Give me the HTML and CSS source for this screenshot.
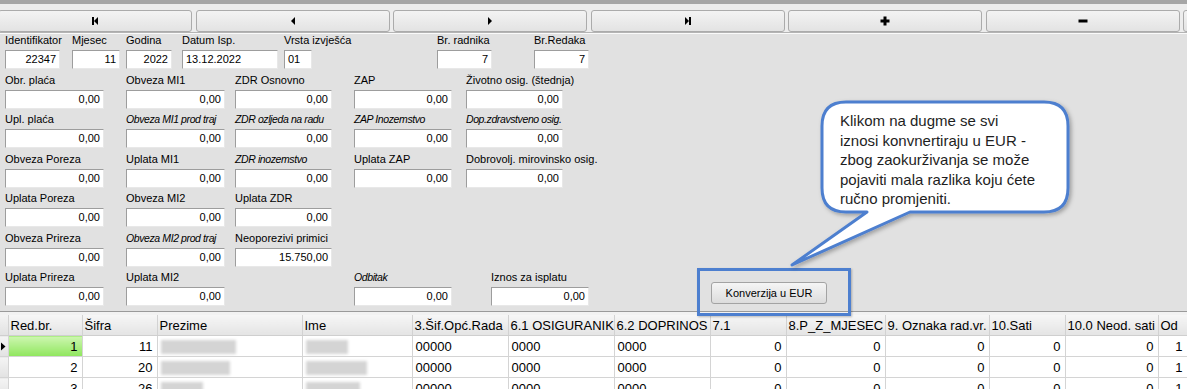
FILE: index.html
```html
<!DOCTYPE html>
<html lang="hr">
<head>
<meta charset="utf-8">
<title>Obračun plaće</title>
<link rel="stylesheet" href="styles.css">
</head>
<body>

<div class="topband"></div>

<div class="toolbar">
  <div class="tbtn"><svg width="10" height="10" viewBox="0 0 10 10"><rect x="2" y="1" width="2" height="8"/><path d="M4 5 L8 1 V9 Z"/></svg></div>
  <div class="tbtn"><svg width="10" height="10" viewBox="0 0 10 10"><path d="M3 5 L7 1 V9 Z"/></svg></div>
  <div class="tbtn"><svg width="10" height="10" viewBox="0 0 10 10"><path d="M7 5 L3 1 V9 Z"/></svg></div>
  <div class="tbtn"><svg width="10" height="10" viewBox="0 0 10 10"><path d="M6 5 L2 1 V9 Z"/><rect x="6" y="1" width="2" height="8"/></svg></div>
  <div class="tbtn"><svg width="10" height="10" viewBox="0 0 10 10"><rect x="0.5" y="3.5" width="9" height="3"/><rect x="3.5" y="0.5" width="3" height="9"/></svg></div>
  <div class="tbtn"><svg width="10" height="10" viewBox="0 0 10 10"><rect x="0.5" y="3.5" width="9" height="3"/></svg></div>
  <div class="tbtn"></div>
</div>

<div class="form">
  <div class="row">
    <div class="field w55"><label>Identifikator</label><div class="inp">22347</div></div>
    <div class="field w48 g12"><label>Mjesec</label><div class="inp">11</div></div>
    <div class="field w46 g6"><label>Godina</label><div class="inp">2022</div></div>
    <div class="field w96 g10"><label>Datum Isp.</label><div class="inp left">13.12.2022</div></div>
    <div class="field w28 g6"><label>Vrsta izvješća</label><div class="inp left">01</div></div>
    <div class="field w55 g125"><label>Br. radnika</label><div class="inp">7</div></div>
    <div class="field w55 g42"><label>Br.Redaka</label><div class="inp">7</div></div>
  </div>

  <div class="row">
    <div class="field c1"><label>Obr. plaća</label><div class="inp">0,00</div></div>
    <div class="field c2"><label>Obveza MI1</label><div class="inp">0,00</div></div>
    <div class="field c3"><label>ZDR Osnovno</label><div class="inp">0,00</div></div>
    <div class="field c4"><label>ZAP</label><div class="inp">0,00</div></div>
    <div class="field c5"><label>Životno osig. (štednja)</label><div class="inp">0,00</div></div>
  </div>

  <div class="row">
    <div class="field c1"><label>Upl. plaća</label><div class="inp">0,00</div></div>
    <div class="field c2"><label class="it">Obveza MI1 prod traj</label><div class="inp">0,00</div></div>
    <div class="field c3"><label class="it">ZDR ozljeda na radu</label><div class="inp">0,00</div></div>
    <div class="field c4"><label class="it">ZAP Inozemstvo</label><div class="inp">0,00</div></div>
    <div class="field c5"><label class="it">Dop.zdravstveno osig.</label><div class="inp">0,00</div></div>
  </div>

  <div class="row">
    <div class="field c1"><label>Obveza Poreza</label><div class="inp">0,00</div></div>
    <div class="field c2"><label>Uplata MI1</label><div class="inp">0,00</div></div>
    <div class="field c3"><label class="it">ZDR inozemstvo</label><div class="inp">0,00</div></div>
    <div class="field c4"><label>Uplata ZAP</label><div class="inp">0,00</div></div>
    <div class="field c5"><label>Dobrovolj. mirovinsko osig.</label><div class="inp">0,00</div></div>
  </div>

  <div class="row">
    <div class="field c1"><label>Uplata Poreza</label><div class="inp">0,00</div></div>
    <div class="field c2"><label>Obveza MI2</label><div class="inp">0,00</div></div>
    <div class="field c3"><label>Uplata ZDR</label><div class="inp">0,00</div></div>
  </div>

  <div class="row">
    <div class="field c1"><label>Obveza Prireza</label><div class="inp">0,00</div></div>
    <div class="field c2"><label class="it">Obveza MI2 prod traj</label><div class="inp">0,00</div></div>
    <div class="field c3"><label>Neoporezivi primici</label><div class="inp">15.750,00</div></div>
  </div>

  <div class="row">
    <div class="field c1"><label>Uplata Prireza</label><div class="inp">0,00</div></div>
    <div class="field c2"><label>Uplata MI2</label><div class="inp">0,00</div></div>
    <div class="field c4 skip"><label class="it">Odbitak</label><div class="inp">0,00</div></div>
    <div class="field w98 g39"><label>Iznos za isplatu</label><div class="inp">0,00</div></div>
    <button class="convert">Konverzija u EUR</button>
  </div>
</div>

<div class="gridwrap">
<table class="grid">
  <colgroup>
    <col class="k8"><col class="k74"><col class="k75"><col class="k145"><col class="k110">
    <col class="k96"><col class="k106"><col class="k96"><col class="k76"><col class="k99">
    <col class="k104"><col class="k76"><col class="k93"><col class="k29">
  </colgroup>
  <thead>
    <tr>
      <th class="ind"></th><th>Red.br.</th><th>Šifra</th><th>Prezime</th><th>Ime</th>
      <th>3.Šif.Opć.Rada</th><th>6.1 OSIGURANIK</th><th>6.2 DOPRINOS</th><th>7.1</th>
      <th>8.P_Z_MJESEC</th><th>9. Oznaka rad.vr.</th><th>10.Sati</th><th>10.0 Neod. sati</th><th>Od</th>
    </tr>
  </thead>
  <tbody>
    <tr>
      <td class="ind"><svg width="6" height="9" viewBox="0 0 6 9"><path d="M1 0.5 L5.5 4.5 L1 8.5 Z"/></svg></td>
      <td class="num cur">1</td><td class="num">11</td>
      <td><span class="blur" style="width:75px"></span></td><td><span class="blur" style="width:42px"></span></td>
      <td>00000</td><td>0000</td><td>0000</td>
      <td class="num">0</td><td class="num">0</td><td class="num">0</td><td class="num">0</td><td class="num">0</td><td class="num">1</td>
    </tr>
    <tr>
      <td class="ind"></td>
      <td class="num">2</td><td class="num">20</td>
      <td><span class="blur" style="width:69px"></span></td><td><span class="blur" style="width:61px"></span></td>
      <td>00000</td><td>0000</td><td>0000</td>
      <td class="num">0</td><td class="num">0</td><td class="num">0</td><td class="num">0</td><td class="num">0</td><td class="num">1</td>
    </tr>
    <tr>
      <td class="ind"></td>
      <td class="num">3</td><td class="num">26</td>
      <td><span class="blur" style="width:42px"></span></td><td><span class="blur" style="width:54px"></span></td>
      <td>00000</td><td>0000</td><td>0000</td>
      <td class="num">0</td><td class="num">0</td><td class="num">0</td><td class="num">0</td><td class="num">0</td><td class="num">1</td>
    </tr>
  </tbody>
</table>
</div>

<div class="highlight"></div>

<svg class="bubble" width="1187" height="389" viewBox="0 0 1187 389">
  <defs>
    <filter id="sh" x="-10%" y="-10%" width="130%" height="130%">
      <feDropShadow dx="2" dy="2" stdDeviation="2" flood-color="#000" flood-opacity="0.3"/>
    </filter>
  </defs>
  <path filter="url(#sh)" d="M846 102 H1044 Q1068 102 1068 126 V188 Q1068 212 1044 212 H910 L792 265 L867 212 H846 Q822 212 822 188 V126 Q822 102 846 102 Z"/>
</svg>
<div class="bubble-text">Klikom na dugme se svi<br>iznosi konvnertiraju u EUR -<br>zbog zaokurživanja se može<br>pojaviti mala razlika koju ćete<br>ručno promjeniti.</div>

</body>
</html>
```

FILE: styles.css
```css
body {
  margin: 0;
  width: 1187px;
  height: 389px;
  overflow: hidden;
  position: relative;
  background: #e1e1e1;
  font-family: "Liberation Sans", Arial, sans-serif;
  font-size: 11px;
  color: #000;
}

/* top toolbar */
.topband {
  height: 4px;
  background: #a6a6a6;
}

.toolbar {
  display: flex;
  gap: 3.5px;
  height: 29px;
  padding-top: 6px;
  box-sizing: border-box;
  margin-left: -2px;
  background: #ededed;
  border-bottom: 1px solid #b4b4b4;
  box-shadow: 0 1px 0 #fafafa;
}

.tbtn {
  flex: 0 0 194px;
  height: 22px;
  box-sizing: border-box;
  border: 1px solid #ababab;
  border-radius: 3px;
  background: linear-gradient(#f3f3f3, #e3e3e3);
  display: flex;
  align-items: center;
  justify-content: center;
}

.tbtn svg {
  fill: #000;
}

/* form */
.form {
  padding: 0 0 0 5px;
  height: 278px;
  box-sizing: border-box;
}

.row {
  display: flex;
  margin-bottom: 3.5px;
}

.field label {
  display: block;
  height: 14px;
  line-height: 14px;
  margin-bottom: 3px;
  white-space: nowrap;
}

.field label.it {
  font-style: italic;
  letter-spacing: -0.4px;
  font-size: 10.5px;
}

.inp {
  height: 19px;
  box-sizing: border-box;
  background: #fff;
  border: 1px solid;
  border-color: #9d9d9d #e8e8e8 #e8e8e8 #9d9d9d;
  text-align: right;
  padding: 0 3px;
  line-height: 17px;
}

.inp.left {
  text-align: left;
}

.w28 { width: 28px; }
.w46 { width: 46px; }
.w48 { width: 48px; }
.w55 { width: 55px; }
.w96 { width: 96px; }
.w98 { width: 98px; }

.g6 { margin-left: 6px; }
.g10 { margin-left: 10px; }
.g12 { margin-left: 12px; }
.g39 { margin-left: 39px; }
.g42 { margin-left: 42px; }
.g125 { margin-left: 125px; }

.c1 { width: 99px; }
.c2 { width: 99px; margin-left: 22px; }
.c3 { width: 97px; margin-left: 10px; }
.c4 { width: 98px; margin-left: 22px; }
.c5 { width: 97px; margin-left: 14px; }
.c4.skip { margin-left: 129px; }

.convert {
  align-self: flex-end;
  margin: 0 0 2px 122px;
  width: 116px;
  height: 22px;
  border: 1px solid #a3a3a3;
  border-radius: 3px;
  background: linear-gradient(#f5f5f5, #dcdcdc);
  font-family: "Liberation Sans", Arial, sans-serif;
  font-size: 11px;
  color: #000;
  padding: 0;
}

/* data grid */
.gridwrap {
  border-top: 1px solid #9a9a9a;
  padding-top: 3px;
  background: #f2f2f2;
}

.grid {
  width: 1187px;
  table-layout: fixed;
  border-collapse: collapse;
  font-size: 13px;
}

.k8 { width: 8px; }
.k29 { width: 29px; }
.k74 { width: 74px; }
.k75 { width: 75px; }
.k76 { width: 76px; }
.k93 { width: 93px; }
.k96 { width: 96px; }
.k99 { width: 99px; }
.k104 { width: 104px; }
.k106 { width: 106px; }
.k110 { width: 110px; }
.k145 { width: 145px; }

.grid th {
  height: 20px;
  padding: 0 0 0 2px;
  font-weight: normal;
  text-align: left;
  white-space: nowrap;
  overflow: hidden;
  background: linear-gradient(#f6f6f6, #e4e4e4);
  border-right: 1px solid #d2d2d2;
  border-bottom: 1px solid #cfcfcf;
}

.grid td {
  height: 20px;
  padding: 0 0 0 3px;
  white-space: nowrap;
  overflow: hidden;
  background: #fff;
  border-right: 1px solid #d4d4d4;
  border-bottom: 1px solid #d4d4d4;
}

.grid td.num {
  text-align: right;
  padding: 0 4px 0 0;
}

.grid td.cur {
  background: linear-gradient(#cdf6b0, #8fe65d);
}

.grid .ind {
  padding: 0;
  background: linear-gradient(#f4f4f4, #e2e2e2);
}

.grid td.ind svg {
  display: block;
  fill: #000;
}

.blur {
  display: inline-block;
  height: 14px;
  vertical-align: middle;
  background: #d4d4d4;
  filter: blur(1.5px);
}

/* callout overlays */
.highlight {
  position: absolute;
  left: 697px;
  top: 268px;
  width: 154px;
  height: 48px;
  box-sizing: border-box;
  border: 3px solid #4d7fcf;
  box-shadow: 1px 1px 2px rgba(0,0,0,.25);
}

.bubble {
  position: absolute;
  left: 0;
  top: 0;
  pointer-events: none;
}

.bubble path {
  fill: #fff;
  stroke: #4d7fcf;
  stroke-width: 3;
  stroke-linejoin: round;
}

.bubble-text {
  position: absolute;
  left: 840px;
  top: 111px;
  font-size: 15px;
  line-height: 19.5px;
  color: #1e1e1e;
  white-space: nowrap;
}
```
